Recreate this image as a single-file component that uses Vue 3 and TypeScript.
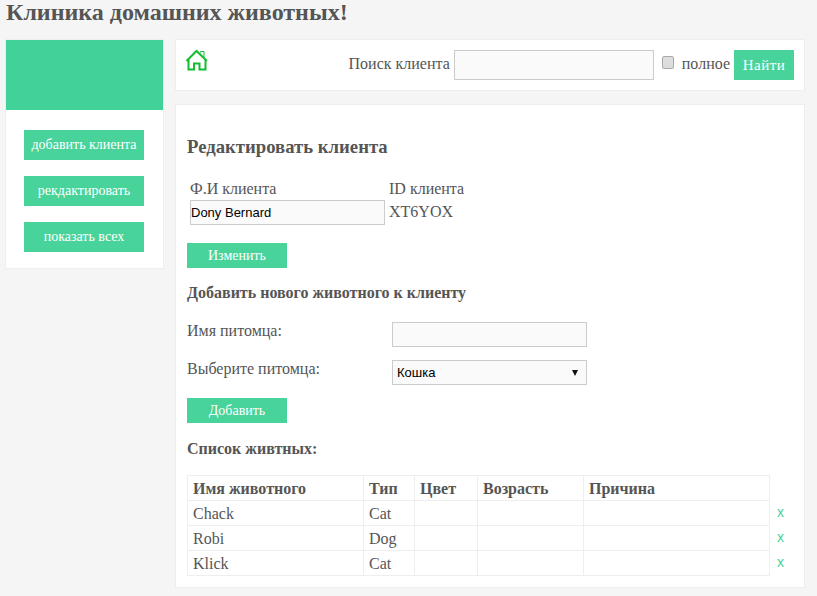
<script setup lang="ts">
const menu = ['добавить клиента', 'рекдактировать', 'показать всех']
const pets = [
  { name: 'Chack', type: 'Cat' },
  { name: 'Robi', type: 'Dog' },
  { name: 'Klick', type: 'Cat' },
]
</script>

<template>
  <div class="page">
    <h1 class="title">Клиника домашних животных!</h1>
    <div class="layout">
      <aside class="side">
        <div class="side-head"></div>
        <div class="side-menu">
          <a v-for="m in menu" :key="m" class="btn side-btn">{{ m }}</a>
        </div>
      </aside>
      <div class="content">
        <div class="card topbar">
          <svg class="home" width="24" height="23" viewBox="0 0 24 23" fill="none" stroke="#12bd2e" stroke-width="2">
            <path d="M1.5 12 11.5 2 22 12M3.5 10.5V20.5H9V14.5H14.5V20.5H20.5V10.5" />
            <path d="M15.5 3.5V2.5H19V8" stroke-width="1" />
          </svg>
          <div class="search">
            <span>Поиск клиента</span>
            <input class="field search-input" type="text" />
            <input class="check" type="checkbox" />
            <span class="full">полное</span>
            <a class="btn find">Найти</a>
          </div>
        </div>
        <div class="card main">
          <h2 class="h-edit">Редактировать клиента</h2>
          <div class="client">
            <div class="client-name">
              <div class="lbl">Ф.И клиента</div>
              <input class="field name-input" type="text" value="Dony Bernard" />
            </div>
            <div>
              <div class="lbl">ID клиента</div>
              <div class="id-val">XT6YOX</div>
            </div>
          </div>
          <a class="btn action change">Изменить</a>
          <h3 class="h-add">Добавить нового животного к клиенту</h3>
          <div class="row">
            <label class="row-lbl">Имя питомца:</label>
            <input class="field pet-input" type="text" />
          </div>
          <div class="row row-select">
            <label class="row-lbl">Выберите питомца:</label>
            <div class="field pet-select">
              <span>Кошка</span>
              <span class="arrow"></span>
            </div>
          </div>
          <a class="btn action add">Добавить</a>
          <h3 class="h-list">Список живтных:</h3>
          <div class="table-wrap">
            <table class="pets">
              <thead>
                <tr>
                  <th class="c1">Имя животного</th>
                  <th class="c2">Тип</th>
                  <th class="c3">Цвет</th>
                  <th class="c4">Возрасть</th>
                  <th>Причина</th>
                </tr>
              </thead>
              <tbody>
                <tr v-for="p in pets" :key="p.name">
                  <td>{{ p.name }}</td>
                  <td>{{ p.type }}</td>
                  <td></td>
                  <td></td>
                  <td></td>
                </tr>
              </tbody>
            </table>
            <div class="removes">
              <a v-for="p in pets" :key="p.name" class="remove">x</a>
            </div>
          </div>
        </div>
      </div>
    </div>
  </div>
</template>

<style>
html,
body {
  background: #f5f5f5;
}
</style>

<style scoped>
.page {
  height: 596px;
  overflow: hidden;
  font-family: "Liberation Serif", serif;
  font-size: 16px;
  color: #555;
}
.title {
  margin: 0;
  padding: 0 0 0 6px;
  height: 39px;
  font-size: 24px;
  line-height: 25px;
  font-weight: bold;
}
.layout {
  display: flex;
  align-items: flex-start;
  gap: 11px;
  padding-left: 5px;
}
.side {
  width: 159px;
  box-sizing: border-box;
  background: #fff;
  border: 1px solid #eee;
}
.side-head {
  height: 70px;
  background: #41d299;
}
.side-menu {
  display: flex;
  flex-direction: column;
  gap: 16px;
  padding: 20px 19px 16px 18px;
}
.btn {
  display: block;
  background: #48d39b;
  color: #fff;
  text-align: center;
}
.side-btn {
  height: 30px;
  line-height: 29px;
  font-size: 14px;
}
.content {
  width: 630px;
  display: flex;
  flex-direction: column;
  gap: 13px;
}
.card {
  box-sizing: border-box;
  background: #fff;
  border: 1px solid #eee;
}
.topbar {
  height: 52px;
  display: flex;
  justify-content: space-between;
  padding: 6px 10px 0 9px;
}
.home {
  margin-top: 3px;
}
.search {
  display: flex;
  align-items: flex-start;
  padding-top: 4px;
}
.search > span {
  line-height: 27px;
}
.field {
  box-sizing: border-box;
  margin: 0;
  background: #fafafa;
  border: 1px solid #ccc;
  border-radius: 0;
  outline: none;
  font-family: "Liberation Sans", sans-serif;
  font-size: 13px;
  color: #000;
}
.search-input {
  width: 200px;
  height: 30px;
  margin-left: 4px;
}
.check {
  appearance: none;
  box-sizing: border-box;
  width: 12px;
  height: 13px;
  margin: 6px 0 0 8px;
  background: #ddd;
  border: 1px solid #aaa;
  border-radius: 2px;
}
.search > .full {
  margin-left: 8px;
}
.find {
  width: 60px;
  height: 30px;
  margin-left: 4px;
  font-size: 15px;
  line-height: 30px;
  letter-spacing: 0.5px;
}
.main {
  height: 484px;
  padding: 0 11px;
}
.h-edit {
  margin: 0;
  padding-top: 32px;
  height: 20px;
  font-size: 18.72px;
  line-height: 20px;
  box-sizing: content-box;
}
.client {
  display: flex;
  margin-top: 20px;
  padding-left: 3px;
}
.client-name {
  width: 199px;
}
.lbl {
  line-height: 23px;
}
.name-input {
  display: block;
  width: 195px;
  height: 25px;
  padding: 0;
  font-size: 13px;
}
.id-val {
  line-height: 23px;
}
.action {
  width: 100px;
  height: 25px;
  font-size: 14px;
  line-height: 25px;
}
.change {
  margin-top: 18px;
}
.h-add {
  margin: 0;
  padding-top: 17px;
  font-size: 16px;
  line-height: 16px;
}
.row {
  display: flex;
  align-items: flex-start;
}
.row-lbl {
  width: 205px;
  line-height: 18px;
}
.row:not(.row-select) {
  margin-top: 21px;
}
.row-select {
  margin-top: 13px;
}
.pet-input {
  width: 195px;
  height: 25px;
}
.pet-select {
  width: 195px;
  height: 25px;
  display: flex;
  align-items: center;
  justify-content: space-between;
  padding: 0 8px 0 4px;
  font-size: 13px;
}
.arrow {
  width: 0;
  height: 0;
  border-left: 3px solid transparent;
  border-right: 3px solid transparent;
  border-top: 6px solid #111;
}
.add {
  margin-top: 13px;
}
.h-list {
  margin: 0;
  padding-top: 17px;
  font-size: 16px;
  line-height: 17px;
}
.table-wrap {
  display: flex;
  margin-top: 18px;
}
.pets {
  width: 583px;
  border-collapse: collapse;
  table-layout: fixed;
}
.pets th,
.pets td {
  box-sizing: border-box;
  height: 25px;
  padding: 0 5px;
  border: 1px solid #eee;
  text-align: left;
  line-height: 17px;
}
.c1 {
  width: 176px;
}
.c2 {
  width: 51px;
}
.c3 {
  width: 63px;
}
.c4 {
  width: 106px;
}
.removes {
  display: flex;
  flex-direction: column;
  padding: 25px 0 0 7px;
}
.remove {
  height: 25px;
  line-height: 25px;
  font-family: "Liberation Sans", sans-serif;
  font-size: 14px;
  color: #48d39b;
}
</style>
